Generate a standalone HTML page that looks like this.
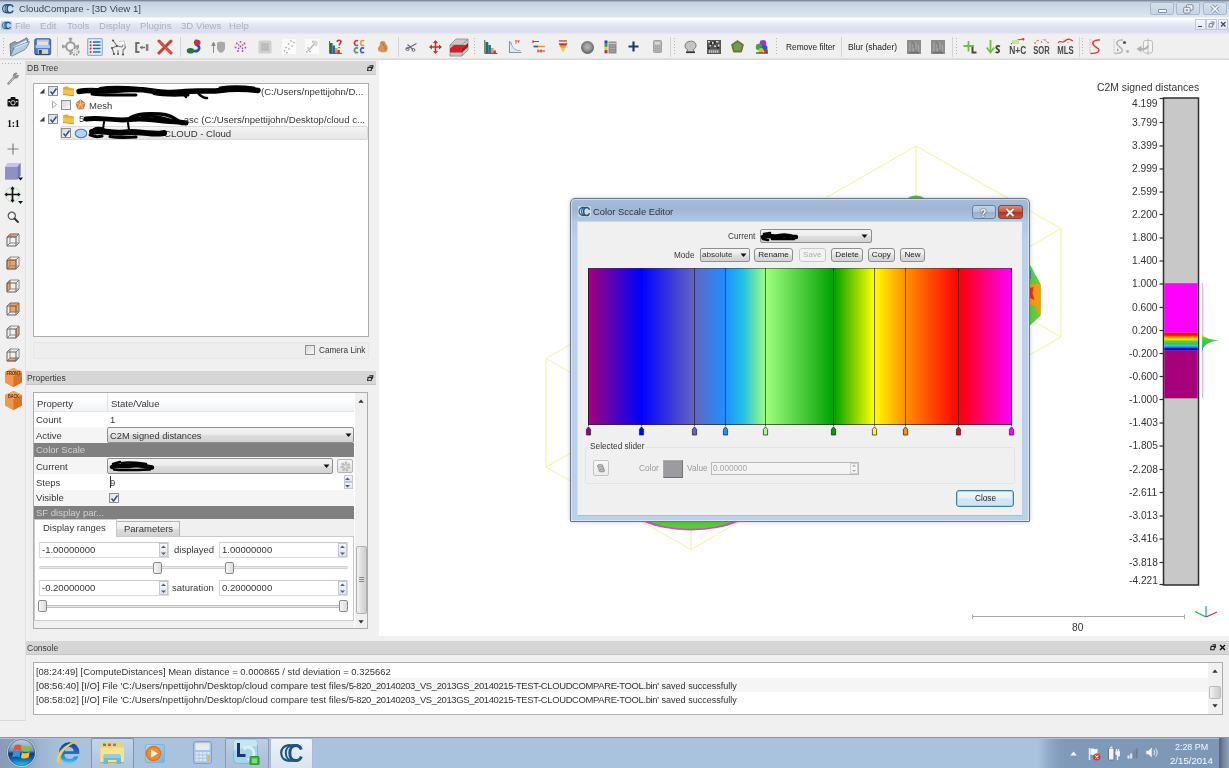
<!DOCTYPE html>
<html>
<head>
<meta charset="utf-8">
<title>CloudCompare</title>
<style>
*{box-sizing:border-box;margin:0;padding:0}
html,body{width:1229px;height:768px;overflow:hidden;background:#f0f0f0;font-family:"Liberation Sans",sans-serif;font-size:9.5px;color:#363636}
.a{position:absolute}
.t{position:absolute;white-space:nowrap;line-height:12px;height:12px;will-change:transform}
#titlebar{left:0;top:0;width:1229px;height:17px;background:linear-gradient(#737f8e 0,#8c98a8 1px,#c3d1e3 2px,#cfdbe9 8px,#dbe5f0 16px)}
#menubar{left:0;top:17px;width:1229px;height:17.5px;background:linear-gradient(#e6ebf4 0,#fafbfe 1.5px,#f5f7fc 4px,#e6e9f6 6.5px,#dfe2f3 10px,#dbdef1 15px,#e2e5f3 16.5px,#eceef5 17.5px)}
#toolbar{left:0;top:34px;width:1229px;height:26px;background:#f0f0f0}
#view3d{left:378.5px;top:60px;width:851px;height:576px;background:#fff}
.ptitle{background:#d6d6d6;height:14px;border-bottom:1px solid #c6c6c6}
.box{background:#fff;border:1px solid #adadad}
.row{position:absolute;left:0;width:320px;height:16px}
.alt{background:#f5f5f5}
.dark{background:#808080}
.combo{position:absolute;border:1px solid #8e8e8e;border-radius:2px;background:linear-gradient(#f4f4f4,#ebebeb 48%,#dedede 52%,#d2d2d2)}
.spin{position:absolute;background:#fff;border:1px solid #dadada;border-top-color:#c8c8c8}
.sbtn{position:absolute;right:1px;width:9px;background:linear-gradient(#f8f8f8,#dfe3ea);border:1px solid #c3c9d3}
.cb{position:absolute;width:10px;height:10px;border:1px solid #8e8f8f;background:linear-gradient(135deg,#d8d8d8,#f8f8f8)}
.sl{width:9px;height:12px;border:1px solid #8a8a8a;border-radius:2px;background:linear-gradient(90deg,#f6f6f6,#dcdcdc)}
.con{font-size:9.45px;color:#333}
.lb{right:71.5px;font-size:10.2px;color:#333;text-align:right}
.btn{will-change:transform;position:absolute;height:14px;line-height:12px;font-size:8.1px;text-align:center;color:#222;border:1px solid #8e8e8e;border-radius:3px;background:linear-gradient(#f4f4f4,#ececec 48%,#dfdfdf 52%,#d4d4d4);white-space:nowrap}
#taskbar{left:0;top:737px;width:1229px;height:31px;background:#a9c3dd}
</style>
</head>
<body>
<div class="a" id="titlebar"></div>
<div class="a" id="menubar"></div>
<div class="a" id="toolbar"></div>
<div class="a" id="view3d"></div>

<!-- TOP -->
<svg class="a" style="left:2px;top:4px" width="12" height="9.5" viewBox="0 0 23 18"><g fill="none" stroke="#1f5583"><path d="M10 1.2C3.8 1.2 1.2 5 1.2 9C1.2 13 3.8 16.8 10 16.8" stroke-width="2.2"/><path d="M13.5 1.3C8 1.3 5.8 5 5.8 9C5.8 13 8 16.7 13.500 16.700" stroke-width="2"/><path d="M21.300 5.600C20.300 2.800 18 1.400 15.800 1.400C12 1.400 9.800 4.600 9.800 9C9.800 13.400 12 16.600 15.800 16.600C18 16.600 20.300 15.200 21.300 12.400" stroke-width="3"/><path d="M9 1.300H16M9 16.700H16" stroke-width="2"/></g></svg>
<div class="t" style="left:19px;top:3px;font-size:9.6px;color:#3c4654">CloudCompare - [3D View 1]</div>
<div class="a" style="left:1150px;top:2px;width:24px;height:13px;border:1px solid #a9b9cc;border-radius:2px;background:linear-gradient(#d3dfec,#c6d4e4)"></div>
<div class="a" style="left:1176px;top:2px;width:24px;height:13px;border:1px solid #a9b9cc;border-radius:2px;background:linear-gradient(#d3dfec,#c6d4e4)"></div>
<div class="a" style="left:1203px;top:2px;width:24px;height:13px;border:1px solid #a9b9cc;border-radius:2px;background:linear-gradient(#d3dfec,#c6d4e4)"></div>
<div class="a" style="left:1158px;top:9px;width:9px;height:4px;border:1px solid #8592a3;background:#f4f6f9;border-radius:1px"></div>
<svg class="a" style="left:1183px;top:4px" width="11" height="10" viewBox="0 0 11 10"><rect x="3.5" y=".7" width="6.5" height="5.5" rx="1" fill="#eef1f5" stroke="#7e8a9b"/><rect x=".7" y="3.3" width="6.5" height="5.8" rx="1" fill="#eef1f5" stroke="#7e8a9b"/><rect x="2.6" y="5.2" width="2.6" height="2" fill="#9aa5b4"/></svg>
<svg class="a" style="left:1210px;top:4px" width="10" height="10" viewBox="0 0 10 10"><path d="M1.5 1.5L8.5 8.5M8.5 1.5L1.5 8.5" stroke="#8592a3" stroke-width="3.2"/><path d="M1.5 1.5L8.5 8.5M8.5 1.5L1.5 8.5" stroke="#fafbfc" stroke-width="1.7"/></svg>
<svg class="a" style="left:1px;top:21px" width="11" height="9" viewBox="-2 -2 27 22"><rect x="-2" y="-2" width="27" height="22" rx="3" fill="#a9cbe4" opacity=".75"/><g fill="none" stroke="#1f5583"><path d="M10 1.2C3.8 1.2 1.2 5 1.2 9C1.2 13 3.8 16.8 10 16.8" stroke-width="2.2"/><path d="M13.5 1.3C8 1.3 5.8 5 5.8 9C5.8 13 8 16.7 13.500 16.700" stroke-width="2"/><path d="M21.300 5.600C20.300 2.800 18 1.400 15.800 1.400C12 1.400 9.800 4.600 9.800 9C9.800 13.400 12 16.600 15.800 16.600C18 16.600 20.300 15.200 21.300 12.400" stroke-width="3"/><path d="M9 1.300H16M9 16.700H16" stroke-width="2"/></g></svg>
<div class="t" style="left:15px;top:20px;font-size:9.6px;color:#abb0c0">File</div>
<div class="t" style="left:40px;top:20px;font-size:9.6px;color:#abb0c0">Edit</div>
<div class="t" style="left:67px;top:20px;font-size:9.6px;color:#abb0c0">Tools</div>
<div class="t" style="left:98.5px;top:20px;font-size:9.6px;color:#abb0c0">Display</div>
<div class="t" style="left:140px;top:20px;font-size:9.6px;color:#abb0c0">Plugins</div>
<div class="t" style="left:180.5px;top:20px;font-size:9.6px;color:#abb0c0">3D Views</div>
<div class="t" style="left:229px;top:20px;font-size:9.6px;color:#abb0c0">Help</div>
<div class="a" style="left:1195px;top:18.5px;width:10.5px;height:11px;border:1px solid #c2c8da;background:linear-gradient(#f6f7fc,#e4e7f4)"></div>
<div class="a" style="left:1206px;top:18.5px;width:10.5px;height:11px;border:1px solid #c2c8da;background:linear-gradient(#f6f7fc,#e4e7f4)"></div>
<div class="a" style="left:1217.5px;top:18.5px;width:10.5px;height:11px;border:1px solid #c2c8da;background:linear-gradient(#f6f7fc,#e4e7f4)"></div>
<div class="a" style="left:1198px;top:25.5px;width:4px;height:1.5px;background:#3d4760"></div>
<svg class="a" style="left:1208px;top:20.5px" width="7" height="7" viewBox="0 0 7 7"><path d="M2.6 1H6.2L5.6 3.8M1.4 2.6H5L4.4 6H.8Z" fill="none" stroke="#6a748c" stroke-width=".9"/></svg>
<svg class="a" style="left:1219.5px;top:21px" width="6.5" height="6.5" viewBox="0 0 6.5 6.5"><path d="M1 1L5.5 5.5M5.5 1L1 5.5" stroke="#3d4760" stroke-width="1.3"/></svg>
<div class="a" style="left:0;top:58px;width:1229px;height:2px;background:linear-gradient(#e2e2e2,#d9d9d9)"></div>
<div class="a" style="left:3px;top:38px;width:1px;height:18px;background:repeating-linear-gradient(#b4b4b4 0 1px,transparent 1px 3px)"></div>
<svg class="a" style="left:9px;top:37px" width="21" height="19.500" viewBox="0 0 21 19.500"><path d="M1.600 18.500L1 7L6 4.500L8 6L15.500 2.200L17.300 .800L19 2.200L18.500 6L4 14Z" fill="#8aa2b4" stroke="#5f7585" stroke-width=".9" stroke-linejoin="round"/><path d="M4.500 9.500L17 3.300L18.300 5.500L6 12.500Z" fill="#f2f6f9"/><path d="M1.600 18.500L5.500 10L20.300 4.500C19.500 8 17.500 11 16 12.500L3.200 19Z" fill="#b0cfe4" stroke="#68849a" stroke-width=".9" stroke-linejoin="round"/><path d="M6.200 11L18.500 6" stroke="#d8e8f3" stroke-width="1.200"/></svg>
<svg class="a" style="left:34px;top:38px" width="17.500" height="17.500" viewBox="0 0 18 18"><rect x=".8" y=".8" width="16.400" height="16.400" rx="1.500" fill="#4f76c2" stroke="#3c5c9c" stroke-width="1"/><rect x="3" y="1.800" width="12" height="6" fill="#dfe3e0"/><rect x="3" y="1.800" width="12" height="2" fill="#c2c8cc"/><rect x="1.600" y="7.200" width="14.800" height="3.200" fill="#a4ccf6"/><rect x="4" y="11.500" width="10.500" height="5.300" fill="#cfd2d6"/><rect x="5" y="12.300" width="3" height="4" fill="#3e4148"/><path d="M1.300 16.900H16.700" stroke="#2e4270" stroke-width="1"/></svg>
<div class="a" style="left:57px;top:37px;width:1px;height:20px;background:#d4d4d4"></div>
<svg class="a" style="left:61px;top:37px" width="20" height="20" viewBox="0 0 20 20"><g fill="none" stroke="#9c9c9c" stroke-width="1.900"><circle cx="9.500" cy="9.500" r="4.300"/><path d="M9.500 1V5.200M9.500 13.800V18M1.200 9.500H5.200M13.800 9.500H17.800"/><path d="M7.800 1.600H11.200M1.800 7.800V11.200M17.200 7.800V11.200" stroke-width="1.600"/></g><circle cx="9.500" cy="9.500" r="2.600" fill="#f8f8f8"/><circle cx="14.300" cy="14.600" r="3.400" fill="#f0f0f0" stroke="#9a9a9a" stroke-width="1.700" stroke-dasharray="1.800 1"/><circle cx="14.300" cy="14.600" r="1.300" fill="#fff" stroke="#aaa" stroke-width=".6"/></svg>
<svg class="a" style="left:87px;top:38px" width="16" height="18" viewBox="0 0 16 18"><rect x=".7" y=".7" width="14.6" height="16.6" rx="1" fill="#e6f0fa" stroke="#8fb1d8" stroke-width="1.3"/><g stroke="#2e68b0" stroke-width="1.5"><path d="M6 4H13.5M6 7.3H13.5M6 10.6H13.5M6 14H13.5"/></g><g fill="#d43a2a"><circle cx="3.6" cy="4" r="1.1"/><circle cx="3.6" cy="7.3" r="1.1"/><circle cx="3.6" cy="10.6" r="1.1"/><circle cx="3.6" cy="14" r="1.1"/></g></svg>
<svg class="a" style="left:110px;top:38px" width="17" height="18" viewBox="0 0 17 18"><path d="M3 2.5L7 8L2 10L4 16M7 8L12 9L14 5L15.5 9.5L13 12L13 16.5M8 12V16" fill="none" stroke="#777" stroke-width="1.1"/><g fill="#555"><circle cx="3" cy="2.5" r="1.1"/><circle cx="7" cy="8" r="1.1"/><circle cx="2" cy="10" r="1.1"/><circle cx="4" cy="16" r="1.1"/><circle cx="13" cy="16.5" r="1.1"/><circle cx="8" cy="16" r="1"/></g><path d="M9 3.5L14.5 3L15 8" fill="#fff" stroke="#bbb" stroke-width=".8"/></svg>
<svg class="a" style="left:135px;top:42px" width="15" height="11" viewBox="0 0 15 11"><path d="M4.5 1H1.2V10H4.5" fill="none" stroke="#707070" stroke-width="2"/><path d="M5 5.5H10" stroke="#707070" stroke-width="1.4"/><path d="M7.5 3.5L5 5.5L7.5 7.5Z" fill="#707070"/><rect x="10.8" y="2.2" width="2.6" height="6.6" fill="#808080"/></svg>
<svg class="a" style="left:157px;top:39px" width="16" height="16" viewBox="0 0 16 16"><path d="M2 2L14 14M14 2L2 14" stroke="#c8402f" stroke-width="3" stroke-linecap="round"/><path d="M2.5 2.2L13.5 13.5" stroke="#e46a55" stroke-width="1"/></svg>
<div class="a" style="left:180px;top:37px;width:1px;height:20px;background:#d4d4d4"></div>
<svg class="a" style="left:186px;top:39px" width="16" height="16" viewBox="0 0 16 16"><path d="M9 2C13 1 15 4 11 6C15 8 13 13 8 12" fill="none" stroke="#2b4fc0" stroke-width="2.6"/><ellipse cx="11" cy="3.4" rx="3.2" ry="2.4" fill="#d82a2a"/><ellipse cx="4.5" cy="11.8" rx="3.8" ry="2.8" fill="#1f7a3a"/></svg>
<svg class="a" style="left:211px;top:40px" width="15" height="14" viewBox="0 0 15 14"><path d="M2.5 13V4M.8 5.5L2.5 2.2L4.2 5.5Z" fill="#8a8a8a" stroke="#8a8a8a" stroke-width="1"/><path d="M6 2.5L10 1.5L14 2.5V8C14 11 11 12.5 10 13C9 12.5 6 11 6 8Z" fill="#a9a9a9"/></svg>
<svg class="a" style="left:234px;top:40px" width="13" height="13" viewBox="0 0 13 13"><circle cx="6.5" cy="6.5" r="5.8" fill="#f3e6ee"/><g fill="#d24a5a"><circle cx="6.5" cy="1.8" r=".9"/><circle cx="10.5" cy="3.5" r=".9"/><circle cx="11.4" cy="7.6" r=".9"/><circle cx="8.6" cy="11" r=".9"/><circle cx="4" cy="11" r=".9"/><circle cx="1.6" cy="7.4" r=".9"/><circle cx="2.8" cy="3.4" r=".9"/><circle cx="6.5" cy="6.5" r=".9"/></g><g fill="#5a6ad2"><circle cx="4.6" cy="5" r=".8"/><circle cx="8.6" cy="5" r=".8"/><circle cx="8.5" cy="8.4" r=".8"/><circle cx="4.6" cy="8.4" r=".8"/></g></svg>
<svg class="a" style="left:258px;top:40px" width="14" height="14" viewBox="0 0 14 14"><rect x=".5" y=".5" width="13" height="13" rx="1.5" fill="#cfcfcf"/><rect x="2.5" y="2.5" width="9" height="9" fill="#bdbdbd" stroke="#dcdcdc" stroke-dasharray="1 1"/></svg>
<svg class="a" style="left:282px;top:39px" width="14" height="15" viewBox="0 0 14 15"><rect width="14" height="15" fill="#fbfbfb"/><g fill="#9a9a9a"><circle cx="9" cy="2" r=".8"/><circle cx="12" cy="3.5" r=".8"/><circle cx="6.5" cy="5" r=".8"/><circle cx="10" cy="7" r=".8"/><circle cx="4" cy="8.5" r=".8"/><circle cx="7" cy="10" r=".8"/><circle cx="2.5" cy="12" r=".8"/><circle cx="5" cy="13.5" r=".8"/></g></svg>
<svg class="a" style="left:305px;top:39px" width="14" height="15" viewBox="0 0 14 15"><rect width="14" height="15" fill="#fbfbfb"/><path d="M3 12L11 3M11 3H7M11 3V7" stroke="#b5b5b5" stroke-width="1.3" fill="none"/><path d="M7 1L13 2.5L12 8" fill="#d8d8d8"/><g fill="#9a9a9a"><circle cx="3" cy="9" r=".8"/><circle cx="5" cy="12.5" r=".8"/><circle cx="2" cy="13" r=".8"/></g></svg>
<svg class="a" style="left:329px;top:39px" width="14" height="15" viewBox="0 0 14 15"><rect x="1" y="4" width="2.6" height="10" fill="#1f7a3a"/><rect x="3.6" y="6.5" width="2.4" height="7.5" fill="#2b5fc0"/><rect x="6" y="9" width="2.4" height="5" fill="#e0a020"/><rect x="8.4" y="11" width="2.4" height="3" fill="#d03030"/><path d="M.6 2V14.4H13" fill="none" stroke="#444" stroke-width=".9"/><path d="M8.2 3C8.2 .8 12 .8 12 3C12 4.6 10.1 4.6 10.1 6.4M10.1 8V9.3" stroke="#d03030" stroke-width="1.5" fill="none"/></svg>
<svg class="a" style="left:353px;top:39px" width="13" height="15" viewBox="0 0 13 15"><g fill="none" stroke-width="1.7"><path d="M5 2.2A2.2 2.4 0 1 0 5 6" stroke="#d03a5a"/><path d="M11 2.2A2.2 2.4 0 1 0 11 6" stroke="#e0a030"/><path d="M5 9.4A2.2 2.4 0 1 0 5 13.2" stroke="#3a9a7a"/><path d="M11 9.4A2.2 2.4 0 1 0 11 13.2" stroke="#3a5ac0"/></g></svg>
<svg class="a" style="left:377px;top:40px" width="12" height="13" viewBox="0 0 12 13"><path d="M4 1.5C6 .5 8.5 1 8.5 3.5C11 5 11.5 10 9.5 11.5C7 13 2 12.5 1 10C.3 8 2 6 3 5C2.5 3.5 3 2 4 1.5Z" fill="#d9925a"/><path d="M4.5 3C6 2.5 7 3.5 6.5 5.5C8.5 6.5 9 9 8 10" fill="none" stroke="#b86a35" stroke-width="1"/></svg>
<div class="a" style="left:398px;top:37px;width:1px;height:20px;background:#d4d4d4"></div>
<svg class="a" style="left:405px;top:41px" width="13" height="12" viewBox="0 0 13 12"><path d="M1.5 8L11.5 2.5M2.5 3.5L8 8.5" stroke="#6a6a7a" stroke-width="1.2"/><circle cx="2.5" cy="8" r="1.6" fill="none" stroke="#6a6a7a"/><circle cx="8.5" cy="9" r="1.4" fill="none" stroke="#6a6a7a"/></svg>
<svg class="a" style="left:429px;top:40px" width="13" height="14" viewBox="0 0 13 14"><path d="M6.5 1.5V12.5M1 7H12" stroke="#c8302a" stroke-width="1.6"/><path d="M6.5 0L9 3H4ZM6.5 14L9 11H4ZM0 7L3 4.5V9.5ZM13 7L10 4.5V9.5Z" fill="#c8302a"/></svg>
<svg class="a" style="left:449px;top:37px" width="20" height="20" viewBox="0 0 20 20"><path d="M1 8L7 2H19V13L13 19H1Z" fill="#c8c8c8" stroke="#8a8a8a" stroke-width=".8"/><path d="M1 8H13L19 2M13 8V19" fill="none" stroke="#8a8a8a" stroke-width=".8"/><path d="M1 11.5L5 8H17L13 11.5V15.5H1Z" fill="#d4202a"/><path d="M13 11.5L19 6V10L13 15.5Z" fill="#a8181e"/></svg>
<div class="a" style="left:474px;top:38px;width:1px;height:18px;background:repeating-linear-gradient(#b4b4b4 0 1px,transparent 1px 3px)"></div>
<svg class="a" style="left:484px;top:40px" width="14" height="14" viewBox="0 0 14 14"><rect x="1.5" y="2" width="2.8" height="11" fill="#1f7a3a"/><rect x="4.3" y="5" width="2.6" height="8" fill="#2b5fc0"/><rect x="6.9" y="8" width="2.6" height="5" fill="#e0a020"/><rect x="9.5" y="10.5" width="2.4" height="2.5" fill="#d03030"/><path d="M.8 0V13.4H13.5" fill="none" stroke="#444" stroke-width=".9"/></svg>
<svg class="a" style="left:508px;top:39px" width="14" height="15" viewBox="0 0 14 15"><path d="M1.5 2V13.5H13.5" fill="none" stroke="#8a93a0" stroke-width="1.1"/><path d="M2.5 3C4 9 6 11.5 12.5 12" fill="none" stroke="#7a8fb5" stroke-width="1.1"/><path d="M2.5 3C4 9 6 11.5 12.5 12V13H2.5Z" fill="#dfe6f2"/><path d="M7 2H12M8 1V5M10.5 1.5V4" stroke="#d85a4a" stroke-width=".9"/></svg>
<svg class="a" style="left:532px;top:39px" width="14" height="15" viewBox="0 0 14 15"><path d="M1 2.5H7M1 1.2V4" stroke="#d03030" stroke-width="1.2"/><path d="M1 7.5H13" stroke="#e0a020" stroke-width="1.6"/><path d="M2 7.5H6" stroke="#2b5fc0" stroke-width="1.6"/><path d="M6 12H13M6 10.5V13.5M9 10.5V13.5" stroke="#d03030" stroke-width="1.1"/></svg>
<svg class="a" style="left:558px;top:40px" width="10" height="13" viewBox="0 0 10 13"><path d="M1 1H9" stroke="#d03030" stroke-width="1.3"/><path d="M.5 3.2H9.5L8.2 5.8H1.8Z" fill="#d03030"/><path d="M1.8 5.8H8.2L7 8.4H3Z" fill="#f0a020"/><path d="M3 8.4H7L5 12.5Z" fill="#e8d020"/></svg>
<div class="a" style="left:580.5px;top:40.5px;width:13px;height:13px;border-radius:50%;background:radial-gradient(circle at 50% 45%,#b8b8b8 0,#9a9a9a 35%,#6c6c6c 62%,#555 100%)"></div>
<svg class="a" style="left:604px;top:40px" width="13" height="14" viewBox="0 0 13 14"><rect x=".5" y=".5" width="3" height="3.2" fill="#2b3fc0"/><rect x=".5" y="3.7" width="3" height="3.2" fill="#30a040"/><rect x=".5" y="6.9" width="3" height="3.2" fill="#e8d020"/><rect x=".5" y="10.1" width="3" height="3.2" fill="#d03030"/><rect x="4.5" y="1.5" width="8" height="12" fill="#8e8e8e"/><path d="M4.5 3.5H12.5" stroke="#c8c8c8" stroke-width="1.2"/><path d="M6 6H11M6 8.5H11M6 11H11" stroke="#b0b0b0" stroke-width=".8"/></svg>
<svg class="a" style="left:628px;top:41px" width="11" height="11" viewBox="0 0 11 11"><path d="M5.5 .5V10.5M.5 5.5H10.5" stroke="#1f3a66" stroke-width="2.2"/></svg>
<svg class="a" style="left:653px;top:40px" width="9" height="13" viewBox="0 0 9 13"><rect x=".5" y=".5" width="8" height="12" rx="1" fill="#b4b4b4" stroke="#a0a0a0"/><rect x="1.8" y="1.8" width="5.4" height="2.6" fill="#d8d8d8"/><path d="M2 6.5H7M2 8.5H7M2 10.5H7" stroke="#9a9a9a" stroke-width=".9" stroke-dasharray="1.2 .7"/></svg>
<div class="a" style="left:670px;top:37px;width:1px;height:20px;background:#d4d4d4"></div>
<div class="a" style="left:674px;top:38px;width:1px;height:18px;background:repeating-linear-gradient(#b4b4b4 0 1px,transparent 1px 3px)"></div>
<svg class="a" style="left:684px;top:40px" width="13" height="14" viewBox="0 0 13 14"><path d="M6.5 1.2C10 1 12.3 3 12 6C11.8 8 10.5 9 9.5 9.5L10 12H3L3.5 9.5C2 9 .8 7.5 1 5.5C1.2 3 3.5 1.3 6.5 1.2Z" fill="#c4c4c4" stroke="#707070" stroke-width=".9"/><path d="M2 12.3H11" stroke="#333" stroke-width="1.6"/></svg>
<svg class="a" style="left:707px;top:40px" width="14" height="14" viewBox="0 0 14 14"><rect width="14" height="14" fill="#555"/><g fill="#d8d8d8"><rect x="1" y="1" width="2" height="1.5"/><rect x="5" y="2" width="1.5" height="2"/><rect x="9" y="1" width="2.5" height="1.5"/><rect x="2.5" y="5" width="1.5" height="1.5"/><rect x="7" y="5.5" width="2" height="1.5"/><rect x="11" y="4.5" width="1.5" height="2"/></g><g fill="#222"><rect x="3.5" y="2.5" width="1.5" height="2"/><rect x="7" y="1.5" width="1.5" height="2.5"/><rect x="10" y="7" width="2" height="1.5"/><rect x="1" y="7.5" width="2" height="1.5"/></g><rect x="1.5" y="9.5" width="11" height="3.5" fill="#888"/><path d="M2.5 10.5V12.5M4.5 10.5V12.5M6.5 10.5V12.5M8.5 10.5V12.5M10.5 10.5V12.5" stroke="#ddd" stroke-width=".8"/></svg>
<svg class="a" style="left:731px;top:40px" width="13" height="13" viewBox="0 0 13 13"><path d="M6.5 .6L12.4 4.6L10.4 12H2.6L.6 4.6Z" fill="#5c8a3a" stroke="#7a5a2a" stroke-width=".9"/><path d="M6.5 2.5L10.5 5.2L9.2 10.2H3.8L2.5 5.2Z" fill="#6ea048"/></svg>
<svg class="a" style="left:755px;top:39px" width="14" height="15" viewBox="0 0 14 15"><circle cx="8" cy="4.5" r="3.4" fill="#9a3ac8"/><circle cx="4" cy="8" r="3.2" fill="#38a848"/><circle cx="9.5" cy="9" r="3" fill="#2a5ac8"/><circle cx="6" cy="11.5" r="2.6" fill="#e0c020"/><circle cx="11" cy="12" r="2" fill="#d03030"/><path d="M1 14H13" stroke="#333" stroke-width="1.2"/></svg>
<div class="a" style="left:776px;top:38px;width:1px;height:18px;background:repeating-linear-gradient(#b4b4b4 0 1px,transparent 1px 3px)"></div>
<div class="t" style="left:785.5px;top:41px;font-size:8.35px;color:#222">Remove filter</div>
<div class="a" style="left:841px;top:37px;width:1px;height:20px;background:#d4d4d4"></div>
<div class="t" style="left:848px;top:41px;font-size:8.5px;color:#222">Blur (shader)</div>
<svg class="a" style="left:907px;top:40px" width="14" height="14" viewBox="0 0 14 14"><rect width="14" height="14" fill="#8c8c8c"/><path d="M3 2V12M6 4V12M9 2V9M11.5 5V12" stroke="#a8a8a8" stroke-width="1.2"/><path d="M2 12.5H12" stroke="#6a6a6a" stroke-width="1.4"/><path d="M4.5 3C6 2 8 5 7 8" stroke="#757575" fill="none"/></svg>
<svg class="a" style="left:930.5px;top:40px" width="14" height="14" viewBox="0 0 14 14"><rect width="14" height="14" fill="#8c8c8c"/><path d="M3 2V12M6 4V12M9 2V9M11.5 5V12" stroke="#a8a8a8" stroke-width="1.2"/><path d="M2 12.5H12" stroke="#6a6a6a" stroke-width="1.4"/><path d="M4.5 3C6 2 8 5 7 8" stroke="#757575" fill="none"/></svg>
<div class="a" style="left:952px;top:37px;width:1px;height:20px;background:#d4d4d4"></div>
<div class="a" style="left:956px;top:38px;width:1px;height:18px;background:repeating-linear-gradient(#b4b4b4 0 1px,transparent 1px 3px)"></div>
<svg class="a" style="left:963px;top:40px" width="15" height="14" viewBox="0 0 15 14"><path d="M5.5 1V11.5M.5 6H11" stroke="#72bc48" stroke-width="1.8"/><path d="M9.5 7V12.5H13.5" fill="none" stroke="#414a41" stroke-width="2"/></svg>
<svg class="a" style="left:986px;top:39px" width="16" height="16" viewBox="0 0 16 16"><path d="M4.5 1V12" stroke="#72bc48" stroke-width="1.8"/><path d="M.8 8.5L4.5 13.5L8.2 8.5" fill="none" stroke="#72bc48" stroke-width="1.8"/><path d="M14 7.5C11 6 9 8 11.5 10C14.5 11.5 13 14.5 9.5 13" fill="none" stroke="#414a41" stroke-width="1.9"/></svg>
<svg class="a" style="will-change:transform;left:1009px;top:38px" width="18" height="17" viewBox="0 0 18 17"><path d="M2 6L9 2L15 .8" stroke="#d03030" stroke-width="1.1" fill="none"/><path d="M13 .2L16 .8L14 3Z" fill="#d03030"/><rect x="3" y="2" width="7" height="4" fill="#c8e0a0"/><text x=".3" y="16" font-family="Liberation Sans" font-weight="bold" font-size="10" fill="#4a4a4a" textLength="17" lengthAdjust="spacingAndGlyphs">N+C</text></svg>
<svg class="a" style="will-change:transform;left:1033px;top:38px" width="17" height="17" viewBox="0 0 17 17"><g fill="#d03030"><circle cx="2" cy="5" r=".7"/><circle cx="5" cy="2.5" r=".7"/><circle cx="8.5" cy="4" r=".7"/><circle cx="12" cy="2" r=".7"/><circle cx="15" cy="4.5" r=".7"/></g><g fill="#e0a020"><circle cx="3.5" cy="3" r=".6"/><circle cx="10" cy="1.5" r=".6"/><circle cx="13.5" cy="3.5" r=".6"/></g><text x=".3" y="16" font-family="Liberation Sans" font-weight="bold" font-size="10" fill="#4a4a4a" textLength="16.4" lengthAdjust="spacingAndGlyphs">SOR</text></svg>
<svg class="a" style="will-change:transform;left:1057px;top:38px" width="17" height="17" viewBox="0 0 17 17"><path d="M1 5C3 1 5 6 8 3S12 1 16 3" fill="none" stroke="#d03030" stroke-width="1.1"/><g fill="#e07030"><circle cx="3" cy="5" r=".6"/><circle cx="7" cy="2" r=".6"/><circle cx="11" cy="4.5" r=".6"/><circle cx="14" cy="1.5" r=".6"/></g><text x=".3" y="16" font-family="Liberation Sans" font-weight="bold" font-size="10" fill="#4a4a4a" textLength="16.4" lengthAdjust="spacingAndGlyphs">MLS</text></svg>
<div class="a" style="left:1079px;top:37px;width:1px;height:20px;background:#d4d4d4"></div>
<div class="a" style="left:1082px;top:38px;width:1px;height:18px;background:repeating-linear-gradient(#b4b4b4 0 1px,transparent 1px 3px)"></div>
<svg class="a" style="left:1088px;top:38px" width="15" height="18" viewBox="0 0 15 18"><path d="M2 1V15" stroke="#e89a90" stroke-width=".9" stroke-dasharray="1.5 1"/><path d="M12 2C6 1.5 3 4 6 7.5C9 10 13 11.5 10 14C8 15.5 4 15.5 2.5 15.5" fill="none" stroke="#d83a3a" stroke-width="1.5"/></svg>
<svg class="a" style="left:1112px;top:38px" width="18" height="18" viewBox="0 0 18 18"><path d="M2 1V16" stroke="#bdbdbd" stroke-width=".9" stroke-dasharray="1.5 1"/><path d="M11 2C6 1.5 3 4 6 7.5C9 10 12 11.5 9.5 14C8 15.5 4 15.5 2.5 15.5" fill="none" stroke="#b4b4b4" stroke-width="1.5"/><circle cx="12.5" cy="4.5" r="1.6" fill="#555"/><circle cx="15.5" cy="13.5" r="1.4" fill="#b0b0b0"/><path d="M5 10.5L7 12L5 13.5Z" fill="#999"/></svg>
<svg class="a" style="left:1136px;top:38px" width="18" height="18" viewBox="0 0 18 18"><rect x="7.5" y="2.5" width="9" height="12.5" rx="2" fill="#f4f4f4" stroke="#bcbcbc" stroke-width="1"/><path d="M12 .5V17" stroke="#bcbcbc" stroke-width="1"/><path d="M12 7.5C11 10.5 8 11.5 5 11" fill="none" stroke="#b0b0b0" stroke-width="2"/><path d="M.5 11L5.5 7.5V14.5Z" fill="#b0b0b0"/></svg>

<!-- VIEW -->

<svg class="a" style="left:378px;top:60px" width="851" height="576" viewBox="0 0 851 576">
<path d="M538.0 86.0L538.0 194.5M538.0 86.0L683.0 168.5M538.0 86.0L168.0 298.5M538.0 194.5L683.0 277.0M538.0 194.5L168.0 407.0M683.0 168.5L683.0 277.0M683.0 168.5L313.0 381.0M168.0 298.5L168.0 407.0M168.0 298.5L313.0 381.0M683.0 277.0L313.0 489.5M168.0 407.0L313.0 489.5M313.0 381.0L313.0 489.5" fill="none" stroke="#f4f196" stroke-width="1"/>
<!-- mesh bits -->
<ellipse cx="538" cy="141" rx="9.5" ry="5.5" fill="#5cc02c"/>
<path d="M651 203L654 208L657 214L660 219L662.7 224.5V255.5L660 258L651 266.5Z" fill="#5ccf3c"/>
<path d="M651 224.5L661.5 224L662.7 227V253L660 255.5L657.5 246L651 244.5Z" fill="#f59a10"/>
<path d="M651 228L655.5 227L654.5 233L656.5 240L652 238Z" fill="#e03018"/>
<path d="M651 209L653 211V219H651Z" fill="#3a7ac8"/>
<ellipse cx="313" cy="438.5" rx="68" ry="32" fill="#d448c8"/>
<ellipse cx="313" cy="437.3" rx="66.5" ry="31.5" fill="#58cf38"/>
<!-- scale line -->
<path d="M594.5 556.5H806.5M594.5 554.5V559M806.5 554.5V559" stroke="#a8a8a8" stroke-width="1" fill="none"/>
<!-- trihedron -->
<path d="M828 557V546" stroke="#20a8e0" stroke-width="1.3"/>
<path d="M828 557L817 551.5" stroke="#20b040" stroke-width="1.3"/>
<path d="M828 557L839 552" stroke="#d03030" stroke-width="1.3"/>
<!-- color bar -->
<rect x="785.5" y="38" width="35" height="487" fill="#c8c8c8" stroke="#2e2e2e" stroke-width="1.5"/>
<rect x="786.3" y="223.2" width="33.4" height="49.5" fill="#ff00ff"/>
<rect x="786.3" y="290.5" width="33.4" height="47.8" fill="#a8007c"/>
<rect x="786.3" y="272.7" width="33.4" height="17.8" fill="url(#rb)"/>
<defs><linearGradient id="rb" x1="0" y1="0" x2="0" y2="1">
<stop offset="0" stop-color="#ff0018"/><stop offset=".14" stop-color="#ff1000"/><stop offset=".24" stop-color="#ff9000"/><stop offset=".36" stop-color="#ffe800"/><stop offset=".48" stop-color="#60d020"/><stop offset=".62" stop-color="#30c850"/><stop offset=".74" stop-color="#40c0e8"/><stop offset=".82" stop-color="#3070e8"/><stop offset=".9" stop-color="#0000f0"/><stop offset="1" stop-color="#2000c0"/></linearGradient>
<linearGradient id="hg" x1="0" y1="0" x2="0" y2="1">
<stop offset="0" stop-color="#ff9000"/><stop offset=".15" stop-color="#d0e000"/><stop offset=".3" stop-color="#50d030"/><stop offset=".7" stop-color="#30c060"/><stop offset=".85" stop-color="#30a0e0"/><stop offset="1" stop-color="#0000e0"/></linearGradient></defs>
<path d="M824.5 223V338" stroke="#eaa8e4" stroke-width="1"/>
<path d="M824 273.5C826 277.5 832 279.5 840.5 280.5C832 281.5 826.5 284 824 290.5Z" fill="url(#hg)"/>
<g stroke="#2e2e2e" stroke-width="1.2"><path d="M781.5 38.5H785"/><path d="M781.5 62.5H785"/><path d="M781.5 86.0H785"/><path d="M781.5 109.0H785"/><path d="M781.5 132.0H785"/><path d="M781.5 154.5H785"/><path d="M781.5 178.0H785"/><path d="M781.5 201.0H785"/><path d="M781.5 224.0H785"/><path d="M781.5 247.5H785"/><path d="M781.5 270.5H785"/><path d="M781.5 293.5H785"/><path d="M781.5 316.5H785"/><path d="M781.5 339.5H785"/><path d="M781.5 363.0H785"/><path d="M781.5 386.0H785"/><path d="M781.5 409.5H785"/><path d="M781.5 432.5H785"/><path d="M781.5 456.0H785"/><path d="M781.5 479.0H785"/><path d="M781.5 502.5H785"/><path d="M781.5 524.5H785"/></g>
</svg>
<div class="t lb" style="top:98.0px">4.199</div>
<div class="t lb" style="top:116.5px">3.799</div>
<div class="t lb" style="top:140.0px">3.399</div>
<div class="t lb" style="top:163.0px">2.999</div>
<div class="t lb" style="top:186.0px">2.599</div>
<div class="t lb" style="top:208.5px">2.200</div>
<div class="t lb" style="top:232.0px">1.800</div>
<div class="t lb" style="top:255.0px">1.400</div>
<div class="t lb" style="top:278.0px">1.000</div>
<div class="t lb" style="top:301.5px">0.600</div>
<div class="t lb" style="top:324.5px">0.200</div>
<div class="t lb" style="top:347.5px">-0.200</div>
<div class="t lb" style="top:370.5px">-0.600</div>
<div class="t lb" style="top:393.5px">-1.000</div>
<div class="t lb" style="top:417.0px">-1.403</div>
<div class="t lb" style="top:440.0px">-1.805</div>
<div class="t lb" style="top:463.5px">-2.208</div>
<div class="t lb" style="top:486.5px">-2.611</div>
<div class="t lb" style="top:510.0px">-3.013</div>
<div class="t lb" style="top:533.0px">-3.416</div>
<div class="t lb" style="top:556.5px">-3.818</div>
<div class="t lb" style="top:574.5px">-4.221</div>
<div class="t" style="left:1096.5px;top:82px;font-size:10.4px;color:#333">C2M signed distances</div>
<div class="t" style="left:1072px;top:622px;font-size:10.2px;color:#333">80</div>


<!-- DIALOG -->
<div class="a" style="left:570px;top:197.5px;width:460px;height:324.5px;border:1px solid #69778a;border-radius:5px 5px 1px 1px;background:linear-gradient(#a6bcd7 0,#9fb7d4 10px,#b1c8e3 22px,#bbd0e9 40px,#bbd0e9 100%);box-shadow:0 0 4px rgba(60,70,90,.3)"></div>
<div class="a" style="left:571px;top:198.5px;width:458px;height:322.5px;border:1px solid rgba(255,255,255,.45);border-radius:4px 4px 0 0"></div>
<div class="a" style="left:576.5px;top:221px;width:446.5px;height:294.5px;background:#f0f0f0;border:1px solid #d3e0ee;border-top-color:#c8d8ea;border-bottom-color:#a9bdd6;border-right-color:#b8cbe0"></div>
<svg class="a" style="left:578px;top:206px" width="13" height="11" viewBox="-1 -1 25 20"><rect x="-1" y="-1" width="25" height="20" fill="#dde7f2" opacity=".7"/><g fill="none" stroke="#1f5583"><path d="M10 1.2C3.8 1.2 1.2 5 1.2 9C1.2 13 3.8 16.8 10 16.8" stroke-width="2.2"/><path d="M13.5 1.3C8 1.3 5.8 5 5.8 9C5.8 13 8 16.7 13.500 16.700" stroke-width="2"/><path d="M21.300 5.600C20.300 2.800 18 1.400 15.800 1.400C12 1.400 9.800 4.600 9.800 9C9.800 13.400 12 16.600 15.800 16.600C18 16.600 20.300 15.200 21.300 12.400" stroke-width="3"/><path d="M9 1.300H16M9 16.700H16" stroke-width="2"/></g></svg>
<div class="t" style="left:592.5px;top:206px;font-size:9.4px;color:#2c3440">Color Sccale Editor</div>
<div class="a" style="left:971.5px;top:205px;width:24px;height:14px;border:1px solid #6f819a;border-radius:3px;background:linear-gradient(#c4d4e8,#b3c6de 48%,#9ab1cf 52%,#a9c0dc)"></div>
<div class="t" style="left:979.5px;top:206.5px;font-size:10.5px;font-weight:bold;color:#fff;text-shadow:0 0 2px #445,0 0 1px #334">?</div>
<div class="a" style="left:997.5px;top:205px;width:25px;height:14px;border:1px solid #7a4a44;border-radius:3px;background:linear-gradient(#dc8a7c,#cc5a48 45%,#b9301c 52%,#c8543c)"></div>
<svg class="a" style="left:1005px;top:207.5px" width="10" height="9" viewBox="0 0 10 9"><path d="M1.5 1L8.5 8M8.5 1L1.5 8" stroke="#6b2a20" stroke-width="3.4" opacity=".6"/><path d="M1.5 1L8.5 8M8.5 1L1.5 8" stroke="#fff" stroke-width="2"/></svg>

<div class="t" style="left:728px;top:231px;font-size:8.2px">Current</div>
<div class="combo" style="left:760px;top:228.8px;width:111.5px;height:14px"></div>
<svg class="a" style="left:861px;top:234px" width="7" height="5"><path d="M.5 .5H6.5L3.5 4Z" fill="#111"/></svg>
<svg class="a" style="left:760px;top:229px" width="44" height="15" viewBox="0 0 44 15"><g fill="none" stroke="#000" stroke-linecap="round"><path d="M3 8C8 5 14 9 20 7S30 8 36 8" stroke-width="4.5"/><path d="M4 5L10 4M12 10H34M3 10L8 11" stroke-width="2.5"/></g></svg>
<div class="t" style="left:674px;top:249.5px;font-size:8.2px">Mode</div>
<div class="combo" style="left:699.5px;top:247.6px;width:50px;height:14px"></div>
<div class="t" style="left:702px;top:249px;font-size:8.1px">absolute</div>
<svg class="a" style="left:740px;top:253px" width="7" height="5"><path d="M.5 .5H6.5L3.5 4Z" fill="#111"/></svg>
<div class="btn" style="left:754px;top:247.6px;width:39px">Rename</div>
<div class="btn" style="left:799px;top:247.6px;width:26.5px;color:#b0b0b0;border-color:#c8c8c8;background:#f2f2f2">Save</div>
<div class="btn" style="left:831px;top:247.6px;width:32px">Delete</div>
<div class="btn" style="left:868px;top:247.6px;width:26.5px">Copy</div>
<div class="btn" style="left:900px;top:247.6px;width:25px">New</div>

<div class="a" style="left:588px;top:268px;width:423.5px;height:157px;background:linear-gradient(90deg,#a5007b 0.00%,#0000ff 12.51%,#6464c0 25.03%,#1e90ff 32.35%,#20c0e8 36.5%,#a0ff80 41.91%,#00a000 57.97%,#ffff00 67.41%,#ff9000 74.85%,#ff0000 87.37%,#ff00ff 99.88%)"></div>
<div class="a" style="left:588px;top:268px;width:423.5px;height:157px;border-top:1px solid rgba(60,60,60,.55);border-bottom:1px solid rgba(40,40,40,.7)"></div>
<div class="a" style="left:587.5px;top:268px;width:1px;height:158px;background:rgba(20,20,40,.62)"></div>
<svg class="a" style="left:584.5px;top:425.5px" width="7" height="10" viewBox="0 0 7 10"><path d="M3.5 .8L5.600 3.400V9H1.400V3.400Z" fill="#a5007b" stroke="rgba(30,30,50,.7)" stroke-width="1"/></svg>
<div class="a" style="left:640.5px;top:268px;width:1px;height:158px;background:rgba(20,20,40,.62)"></div>
<svg class="a" style="left:637.5px;top:425.5px" width="7" height="10" viewBox="0 0 7 10"><path d="M3.5 .8L5.600 3.400V9H1.400V3.400Z" fill="#0000ff" stroke="rgba(30,30,50,.7)" stroke-width="1"/></svg>
<div class="a" style="left:693.5px;top:268px;width:1px;height:158px;background:rgba(20,20,40,.62)"></div>
<svg class="a" style="left:690.5px;top:425.5px" width="7" height="10" viewBox="0 0 7 10"><path d="M3.5 .8L5.600 3.400V9H1.400V3.400Z" fill="#6464c0" stroke="rgba(30,30,50,.7)" stroke-width="1"/></svg>
<div class="a" style="left:724.5px;top:268px;width:1px;height:158px;background:rgba(20,20,40,.62)"></div>
<svg class="a" style="left:721.5px;top:425.5px" width="7" height="10" viewBox="0 0 7 10"><path d="M3.5 .8L5.600 3.400V9H1.400V3.400Z" fill="#1e90ff" stroke="rgba(30,30,50,.7)" stroke-width="1"/></svg>
<div class="a" style="left:765.0px;top:268px;width:1px;height:158px;background:rgba(20,20,40,.62)"></div>
<svg class="a" style="left:762.0px;top:425.5px" width="7" height="10" viewBox="0 0 7 10"><path d="M3.5 .8L5.600 3.400V9H1.400V3.400Z" fill="#a0ff80" stroke="rgba(30,30,50,.7)" stroke-width="1"/></svg>
<div class="a" style="left:833.0px;top:268px;width:1px;height:158px;background:rgba(20,20,40,.62)"></div>
<svg class="a" style="left:830.0px;top:425.5px" width="7" height="10" viewBox="0 0 7 10"><path d="M3.5 .8L5.600 3.400V9H1.400V3.400Z" fill="#00a000" stroke="rgba(30,30,50,.7)" stroke-width="1"/></svg>
<div class="a" style="left:874.0px;top:268px;width:1px;height:158px;background:rgba(20,20,40,.62)"></div>
<svg class="a" style="left:871.0px;top:425.5px" width="7" height="10" viewBox="0 0 7 10"><path d="M3.5 .8L5.600 3.400V9H1.400V3.400Z" fill="#ffff00" stroke="rgba(30,30,50,.7)" stroke-width="1"/></svg>
<div class="a" style="left:904.5px;top:268px;width:1px;height:158px;background:rgba(20,20,40,.62)"></div>
<svg class="a" style="left:901.5px;top:425.5px" width="7" height="10" viewBox="0 0 7 10"><path d="M3.5 .8L5.600 3.400V9H1.400V3.400Z" fill="#ff9000" stroke="rgba(30,30,50,.7)" stroke-width="1"/></svg>
<div class="a" style="left:957.5px;top:268px;width:1px;height:158px;background:rgba(20,20,40,.62)"></div>
<svg class="a" style="left:954.5px;top:425.5px" width="7" height="10" viewBox="0 0 7 10"><path d="M3.5 .8L5.600 3.400V9H1.400V3.400Z" fill="#ff0000" stroke="rgba(30,30,50,.7)" stroke-width="1"/></svg>
<div class="a" style="left:1010.5px;top:268px;width:1px;height:158px;background:rgba(20,20,40,.62)"></div>
<svg class="a" style="left:1007.5px;top:425.5px" width="7" height="10" viewBox="0 0 7 10"><path d="M3.5 .8L5.600 3.400V9H1.400V3.400Z" fill="#ff00ff" stroke="rgba(30,30,50,.7)" stroke-width="1"/></svg>

<div class="a" style="left:584.5px;top:447px;width:430px;height:36.5px;border:1px solid #e3e3e3;border-radius:3px"></div>
<div class="t" style="left:588px;top:440px;font-size:8.3px;background:#f0f0f0;padding:0 2px">Selected slider</div>
<div class="a" style="left:592.5px;top:460px;width:16px;height:16px;border:1px solid #c4c4c4;border-radius:2px;background:linear-gradient(#f8f8f8,#ececec)"></div>
<svg class="a" style="left:595.5px;top:463px" width="10" height="10" viewBox="0 0 10 10"><ellipse cx="4.2" cy="3" rx="3" ry="1.6" fill="#bdbdbd" stroke="#8a8a8a" stroke-width=".7"/><ellipse cx="5" cy="5.2" rx="3" ry="1.6" fill="#c8c8c8" stroke="#8a8a8a" stroke-width=".7"/><ellipse cx="5.8" cy="7.4" rx="3" ry="1.6" fill="#b4b4b4" stroke="#8a8a8a" stroke-width=".7"/></svg>
<div class="t" style="left:639px;top:462px;font-size:8.3px;color:#9a9a9a">Color</div>
<div class="a" style="left:663px;top:459.5px;width:19.5px;height:18px;background:#9c9ca0;border-right:1.5px solid #77777b;border-bottom:1.5px solid #6e6e72;border-top:1px solid #a8a8ac;border-left:1px solid #a8a8ac"></div>
<div class="t" style="left:687px;top:462px;font-size:8.3px;color:#9a9a9a">Value</div>
<div class="a" style="left:710.5px;top:461.5px;width:148.5px;height:13.5px;border:1px solid #b9b9b9;background:#f4f4f4"></div>
<div class="t" style="left:713px;top:462.5px;font-size:8.2px;color:#a6a6a6">0.000000</div>
<div class="a" style="left:850px;top:462.5px;width:8px;height:11.5px;border:1px solid #d0d0d0;background:#f6f6f6"></div>
<svg class="a" style="left:852px;top:464px" width="4" height="9"><path d="M0 2.5L2 .5L4 2.5ZM0 6L2 8L4 6Z" fill="#a8a8a8"/></svg>
<div class="a" style="left:955.5px;top:490px;width:58.5px;height:17px;border:1px solid #3c7fb1;border-radius:3px;background:linear-gradient(#f2f7fb,#e6f0f8 48%,#d4e6f4 52%,#cfe3f3);box-shadow:inset 0 0 0 1px #9fd5f0"></div>
<div class="t" style="left:975px;top:493px;font-size:8.2px;color:#222">Close</div>

<!-- LEFT TB -->
<div class="a" style="left:2px;top:63px;width:21px;height:1px;background:repeating-linear-gradient(90deg,#b4b4b4 0 1px,transparent 1px 3px)"></div>
<svg class="a" style="left:7px;top:72px" width="12" height="13" viewBox="0 0 12 13"><path d="M1.5 11.5L7.5 5" stroke="#8a8a8a" stroke-width="2.4" stroke-linecap="round"/><path d="M6.5 4.2C6 2 8 .6 10 1.2L8.6 3L9.6 4.2L11.2 3C11.6 5 10 6.6 8 6" fill="#9a9a9a" stroke="#7a7a7a" stroke-width=".8"/><path d="M2 11L7 5.6" stroke="#e0e0e0" stroke-width=".8"/></svg>
<svg class="a" style="left:7px;top:96px" width="12" height="11" viewBox="0 0 12 11"><rect x=".5" y="3" width="11" height="7.5" rx="1" fill="#111"/><rect x="3.5" y="1" width="5" height="3" rx="1" fill="#111"/><circle cx="6" cy="6.8" r="2.2" fill="#111" stroke="#e8e8e8" stroke-width=".9"/><rect x="1.5" y="5" width="1.6" height="1.2" fill="#ddd"/><rect x="9" y="5" width="1.6" height="1.2" fill="#ddd"/></svg>
<div class="t" style="left:6.5px;top:118px;font-family:'Liberation Serif',serif;font-weight:bold;font-size:10px;color:#111;letter-spacing:-.3px">1:1</div>
<svg class="a" style="left:7px;top:142.5px" width="12" height="12" viewBox="0 0 12 12"><path d="M6 .5V11.5M.5 6H11.5" stroke="#808080" stroke-width="1.2"/></svg>
<svg class="a" style="left:3.5px;top:162px" width="19" height="19" viewBox="0 0 19 19"><path d="M1 5L4 1H16.5V13.5L13.5 17.5H1Z" fill="#a4a4d8"/><path d="M1 5H13.5V17.5H1Z" fill="#9090c8"/><path d="M1 5L4 1H16.5L13.5 5Z" fill="#c4c4ec"/><path d="M13.5 5L16.5 1V13.5L13.5 17.5Z" fill="#7878b4"/><path d="M14 15.5H19L16.5 18.5Z" fill="#111"/></svg>
<svg class="a" style="left:4px;top:186px" width="20" height="18" viewBox="0 0 20 18"><circle cx="8.5" cy="8.5" r="7.3" fill="#eef4ee" stroke="#b8d8c0" stroke-width=".9"/><path d="M8.5 2V15M2 8.5H15" stroke="#111" stroke-width="1.7"/><path d="M8.5 .3L10.6 3.2H6.4ZM8.5 16.7L10.6 13.8H6.4ZM.3 8.5L3.2 6.4V10.6ZM16.7 8.5L13.8 6.4V10.6Z" fill="#111"/><path d="M14 15H19L16.5 18Z" fill="#111"/></svg>
<svg class="a" style="left:7px;top:211px" width="12" height="12" viewBox="0 0 12 12"><circle cx="4.8" cy="4.8" r="3.6" fill="#f4f4f4" stroke="#555" stroke-width="1.2"/><path d="M7.5 7.5L11 11" stroke="#333" stroke-width="1.9" stroke-linecap="round"/></svg>
<svg class="a" style="left:5.5px;top:232.7px" width="14" height="14" viewBox="0 0 14 14"><path d="M1 4L4 1H13L10 4Z" fill="#f0a060" stroke="#d07030" stroke-width=".6"/><g fill="none" stroke="#505050" stroke-width=".9"><path d="M1 4H10V13H1Z"/><path d="M4 1H13V10H4Z" stroke="#808080"/><path d="M1 4L4 1M10 4L13 1M10 13L13 10M1 13L4 10" stroke="#707070"/></g></svg>
<svg class="a" style="left:5.5px;top:255.60000000000002px" width="14" height="14" viewBox="0 0 14 14"><path d="M1 4H10V13H1Z" fill="#f0a060" stroke="#d07030" stroke-width=".6"/><g fill="none" stroke="#505050" stroke-width=".9"><path d="M1 4H10V13H1Z"/><path d="M4 1H13V10H4Z" stroke="#808080"/><path d="M1 4L4 1M10 4L13 1M10 13L13 10M1 13L4 10" stroke="#707070"/></g></svg>
<svg class="a" style="left:5.5px;top:279px" width="14" height="14" viewBox="0 0 14 14"><path d="M1 4L4 1V10L1 13Z" fill="#f0a060" stroke="#d07030" stroke-width=".6"/><g fill="none" stroke="#505050" stroke-width=".9"><path d="M1 4H10V13H1Z"/><path d="M4 1H13V10H4Z" stroke="#808080"/><path d="M1 4L4 1M10 4L13 1M10 13L13 10M1 13L4 10" stroke="#707070"/></g></svg>
<svg class="a" style="left:5.5px;top:301.8px" width="14" height="14" viewBox="0 0 14 14"><path d="M4 1H13V10H4Z" fill="#f0a060" stroke="#d07030" stroke-width=".6"/><g fill="none" stroke="#505050" stroke-width=".9"><path d="M1 4H10V13H1Z"/><path d="M4 1H13V10H4Z" stroke="#808080"/><path d="M1 4L4 1M10 4L13 1M10 13L13 10M1 13L4 10" stroke="#707070"/></g></svg>
<svg class="a" style="left:5.5px;top:324.7px" width="14" height="14" viewBox="0 0 14 14"><path d="M10 4L13 1V10L10 13Z" fill="#f0a060" stroke="#d07030" stroke-width=".6"/><g fill="none" stroke="#505050" stroke-width=".9"><path d="M1 4H10V13H1Z"/><path d="M4 1H13V10H4Z" stroke="#808080"/><path d="M1 4L4 1M10 4L13 1M10 13L13 10M1 13L4 10" stroke="#707070"/></g></svg>
<svg class="a" style="left:5.5px;top:347.5px" width="14" height="14" viewBox="0 0 14 14"><path d="M1 13L4 10H13L10 13Z" fill="#f0a060" stroke="#d07030" stroke-width=".6"/><g fill="none" stroke="#505050" stroke-width=".9"><path d="M1 4H10V13H1Z"/><path d="M4 1H13V10H4Z" stroke="#808080"/><path d="M1 4L4 1M10 4L13 1M10 13L13 10M1 13L4 10" stroke="#707070"/></g></svg>
<svg class="a" style="will-change:transform;left:3.5px;top:367.0px" width="19" height="21" viewBox="0 0 19 21"><path d="M9.5 1L18 5V15.5L9.5 20L1 15.5V5Z" fill="#e88838"/><path d="M1 5L9.5 9V20L1 15.5Z" fill="#f09848"/><path d="M18 5L9.5 9V20L18 15.5Z" fill="#d87428"/><path d="M1 5L9.5 1L18 5L9.5 9Z" fill="#f4a860"/><text x="9.5" y="7.6" text-anchor="middle" font-family="Liberation Sans" font-weight="bold" font-size="4.6" fill="#4a2a10" textLength="14" lengthAdjust="spacingAndGlyphs">FRONT</text></svg>
<svg class="a" style="will-change:transform;left:3.5px;top:389.8px" width="19" height="21" viewBox="0 0 19 21"><path d="M9.5 1L18 5V15.5L9.5 20L1 15.5V5Z" fill="#e88838"/><path d="M1 5L9.5 9V20L1 15.5Z" fill="#f09848"/><path d="M18 5L9.5 9V20L18 15.5Z" fill="#d87428"/><path d="M1 5L9.5 1L18 5L9.5 9Z" fill="#f4a860"/><text x="9.5" y="7.6" text-anchor="middle" font-family="Liberation Sans" font-weight="bold" font-size="4.6" fill="#4a2a10" textLength="11" lengthAdjust="spacingAndGlyphs">BACK</text></svg>

<!-- DB TREE -->
<div class="a ptitle" style="left:26px;top:60.5px;width:349.5px;height:14.5px"></div>
<div class="t" style="left:27px;top:62px;font-size:8.5px">DB Tree</div>
<div class="a box" style="left:33px;top:83px;width:335.5px;height:254px"></div>
<div class="a" style="left:33px;top:342px;width:336px;height:17px;border:1px solid #e6e6e6;border-radius:2px;background:#eeeeee"></div>
<div class="cb" style="left:305px;top:345px"></div>
<div class="t" style="left:319px;top:345px;font-size:8.2px">Camera Link</div>


<!-- tree rows -->
<div class="a" style="left:60px;top:126px;width:308px;height:14px;background:linear-gradient(#f4f4f4,#e6e6e6);border:1px solid #dadada;border-radius:2px"></div>
<svg class="a" style="left:38px;top:87px" width="8" height="8" viewBox="0 0 8 8"><path d="M6.5 1.5V6.5H1.5Z" fill="#404040"/></svg>
<svg class="a" style="left:38px;top:115px" width="8" height="8" viewBox="0 0 8 8"><path d="M6.5 1.5V6.5H1.5Z" fill="#404040"/></svg>
<svg class="a" style="left:51px;top:100px" width="8" height="9" viewBox="0 0 8 9"><path d="M1.5 1L5.5 4.5L1.5 8Z" fill="#fff" stroke="#a8a8a8" stroke-width="1"/></svg>
<div class="cb" style="left:48px;top:86px"></div>
<div class="cb" style="left:61px;top:100px"></div>
<div class="cb" style="left:48px;top:114px"></div>
<div class="cb" style="left:61px;top:128px"></div>
<svg class="a" style="left:49px;top:87px" width="9" height="9" viewBox="0 0 9 9"><path d="M1.5 4.5L3.5 7L7.5 1.5" fill="none" stroke="#3a4f9a" stroke-width="1.6"/></svg>
<svg class="a" style="left:49px;top:115px" width="9" height="9" viewBox="0 0 9 9"><path d="M1.5 4.5L3.5 7L7.5 1.5" fill="none" stroke="#3a4f9a" stroke-width="1.6"/></svg>
<svg class="a" style="left:62px;top:129px" width="9" height="9" viewBox="0 0 9 9"><path d="M1.5 4.5L3.5 7L7.5 1.5" fill="none" stroke="#3a4f9a" stroke-width="1.6"/></svg>
<!-- folders -->
<svg class="a" style="left:62px;top:85px" width="13" height="12" viewBox="0 0 13 12"><path d="M1 2.5L5 1L6.5 2.5L12 3.5V10.5L1 9.5Z" fill="#e3b02f"/><path d="M1 4.5L12 5.5V10.8L1 9.7Z" fill="#f0c64a"/><path d="M1 9.5L12 10.8" stroke="#b8861a" stroke-width=".8"/></svg>
<svg class="a" style="left:62px;top:113px" width="13" height="12" viewBox="0 0 13 12"><path d="M1 2.5L5 1L6.5 2.5L12 3.5V10.5L1 9.5Z" fill="#e3b02f"/><path d="M1 4.5L12 5.5V10.8L1 9.7Z" fill="#f0c64a"/><path d="M1 9.5L12 10.8" stroke="#b8861a" stroke-width=".8"/></svg>
<!-- mesh icon -->
<svg class="a" style="left:75px;top:99px" width="11" height="11" viewBox="0 0 11 11"><path d="M5.5 .8L10 4.2L8.3 9.8H2.7L1 4.2Z" fill="#e08a4a" stroke="#c05a20" stroke-width=".8"/><path d="M5.5 .8V5.5L10 4.2M5.5 5.5L8.3 9.8M5.5 5.5L2.7 9.8M5.5 5.5L1 4.2" stroke="#f8d8b8" stroke-width=".7" fill="none"/></svg>
<!-- cloud icon -->
<svg class="a" style="left:74px;top:128px" width="14" height="11" viewBox="0 0 14 11"><ellipse cx="7" cy="5.5" rx="5.8" ry="4.2" fill="#b5d3ef" stroke="#3f7fc4" stroke-width="1.1"/></svg>
<div class="t" style="left:89px;top:100px">Mesh</div>
<div class="t" style="left:261px;top:85.5px;font-size:9.6px">(C:/Users/npettijohn/D...</div>
<div class="t" style="left:181px;top:114px;font-size:9.6px">.asc (C:/Users/npettijohn/Desktop/cloud c...</div>
<div class="t" style="left:164px;top:128px;font-size:9.6px">CLOUD - Cloud</div>
<div class="t" style="left:79px;top:113px">5</div>
<!-- scribbles -->
<svg class="a" style="left:70px;top:80px" width="200" height="62" viewBox="0 0 200 62">
<g fill="none" stroke="#000" stroke-linecap="round" stroke-linejoin="round">
<path d="M9 11.5C20 9 30 12 45 10.5S70 9 82 11S100 13 115 11.5S140 12 150 10.5S175 9 188 10.5" stroke-width="5.5"/>
<path d="M30 8.5C40 6.5 55 7 70 8.5M22 14C35 16 50 14.5 66 15M84 13.5C95 16 105 15 118 15M150 8C160 6.5 172 6.5 184 8" stroke-width="3"/>
<path d="M128 13C131 17 135 18.5 137 18M112 11L116 17" stroke-width="2.5"/>
<path d="M16 39C30 36.500 45 41.500 60 39.500S85 41 100 41.500S110 42.500 116 43" stroke-width="5"/>
<path d="M60 38C68 33 80 33.500 90 34S104 38 112 43.500" stroke-width="3.500"/>
<path d="M72 36.500C80 35 90 37 100 40" stroke-width="3"/>
<path d="M34 42L33 49M58 43L59 50" stroke-width="2"/>
<path d="M22 52C32 49.500 42 54 54 52.500S70 53 82 53.500S90 53 94 53" stroke-width="6"/>
<path d="M24 49.500C27 47.500 32 48 35 50.500M40 56.500C48 58 58 57.500 66 57M20 55C24 57 28 57 32 56" stroke-width="3"/>
</g></svg>
<svg class="a" style="left:367px;top:64.5px" width="6.5" height="6.5" viewBox="0 0 7 7"><path d="M2.6 .8H6.4L5.8 4M1.2 2.5H5L4.4 6.2H.6Z" fill="none" stroke="#222" stroke-width="1.2"/></svg>

<!-- PROPERTIES -->
<div class="a ptitle" style="left:26px;top:370.5px;width:349.5px"></div>
<div class="t" style="left:27px;top:372px;font-size:8.5px">Properties</div>
<div class="a box" id="props" style="left:33px;top:392px;width:335px;height:237px"></div>


<div class="a" id="ptable" style="left:34px;top:393px;width:320px;height:235px;overflow:hidden">
 <div class="row" style="top:0;height:19px;background:linear-gradient(#fff,#fdfdfe 45%,#f0f2f5);border-bottom:1px solid #e2e4e8"></div>
 <div class="a" style="left:73px;top:0;width:1px;height:19px;background:#e3e3e3"></div>
 <div class="row" style="top:19px;height:15px"></div>
 <div class="row alt" style="top:34px"></div>
 <div class="row dark" style="top:50px;height:13.500px"></div>
 <div class="row alt" style="top:63.500px;height:17.500px"></div>
 <div class="row" style="top:81px"></div>
 <div class="row alt" style="top:97px"></div>
 <div class="row dark" style="top:113px;height:13px"></div>
 <div class="t" style="left:3px;top:5px">Property</div>
 <div class="t" style="left:77px;top:5px">State/Value</div>
 <div class="t" style="left:2px;top:21px">Count</div>
 <div class="t" style="left:76px;top:21px">1</div>
 <div class="t" style="left:2px;top:37px">Active</div>
 <div class="t" style="left:2px;top:51px;color:#d0d0d0">Color Scale</div>
 <div class="t" style="left:2px;top:68px">Current</div>
 <div class="t" style="left:2px;top:84px">Steps</div>
 <div class="t" style="left:2px;top:99px">Visible</div>
 <div class="t" style="left:2px;top:114px;color:#d0d0d0">SF display par...</div>
 <div class="combo" style="left:73px;top:34px;width:247px;height:16px"></div>
 <div class="t" style="left:76px;top:37px;font-size:9.3px">C2M signed distances</div>
 <svg class="a" style="left:311px;top:40px" width="7" height="5"><path d="M.5 .5H6.5L3.5 4Z" fill="#111"/></svg>
 <div class="combo" style="left:73px;top:65px;width:226px;height:16px"></div>
 <svg class="a" style="left:289px;top:71px" width="7" height="5"><path d="M.5 .5H6.5L3.5 4Z" fill="#111"/></svg>
 <svg class="a" style="left:74px;top:66px" width="60" height="14" viewBox="0 0 60 14"><g fill="none" stroke="#000" stroke-linecap="round"><path d="M4 8C10 5.500 16 8 24 6.500S36 7.500 44 8.500" stroke-width="4.500"/><path d="M5 5L12 3M6 10.500C14 11.500 28 11 42 10.500M14 4C20 3 30 4 38 5" stroke-width="2.500"/></g></svg>
 <div class="a" style="left:303px;top:66px;width:16px;height:14px;border:1px solid #b5b5b5;border-radius:2px;background:linear-gradient(#f6f6f6,#e0e0e0)"></div>
 <svg class="a" style="left:304.500px;top:66.500px" width="13" height="13" viewBox="0 0 10 10"><circle cx="5" cy="5" r="2.6" fill="none" stroke="#b8b8b8" stroke-width="2.4" stroke-dasharray="1.4 .9"/><circle cx="5" cy="5" r="2.2" fill="#c4c4c4"/><circle cx="5" cy="5" r="1" fill="#e8e8e8"/></svg>
 <div class="t" style="left:76px;top:84px">9</div>
 <div class="a" style="left:76px;top:83px;width:1px;height:12px;background:#333"></div>
 <div class="sbtn" style="top:82px;height:7px"></div>
 <div class="sbtn" style="top:89px;height:7px"></div>
 <svg class="a" style="left:311px;top:84px" width="5" height="11"><path d="M0 3L2.5 .5L5 3ZM0 8L2.5 10.5L5 8Z" fill="#4a5f8a"/></svg>
 <div class="cb" style="left:75px;top:100px;background:linear-gradient(135deg,#dfe3ea,#fbfbfd)"></div>
 <svg class="a" style="left:76px;top:101px" width="9" height="9" viewBox="0 0 9 9"><path d="M1.5 4.5L3.5 7L7.5 1.5" fill="none" stroke="#3a4f9a" stroke-width="1.6"/></svg>

 <!-- tabs -->
 <div class="a" style="left:0;top:126px;width:320px;height:110px;background:#f0f0f0"></div>
 <div class="a" style="left:0;top:143px;width:320px;height:85px;background:#fff;border:1px solid #c9c9c9"></div>
 <div class="a" style="left:82px;top:128px;width:64px;height:16px;border:1px solid #b4b4b4;border-bottom-color:#c9c9c9;background:linear-gradient(#f4f4f4,#ececec 50%,#dcdcdc 51%,#d3d3d3)"></div>
 <div class="a" style="left:0;top:126px;width:83px;height:18px;border:1px solid #c9c9c9;border-bottom:none;background:#fff"></div>
 <div class="t" style="left:9px;top:129px">Display ranges</div>
 <div class="t" style="left:90px;top:130px">Parameters</div>

 <div class="spin" style="left:5px;top:149px;width:130px;height:16px"></div>
 <div class="spin" style="left:185px;top:149px;width:129px;height:16px"></div>
 <div class="spin" style="left:5px;top:187px;width:130px;height:16px"></div>
 <div class="spin" style="left:185px;top:187px;width:129px;height:16px"></div>
 <div class="t" style="left:8px;top:151px">-1.00000000</div>
 <div class="t" style="left:188px;top:151px">1.00000000</div>
 <div class="t" style="left:8px;top:189px">-0.20000000</div>
 <div class="t" style="left:188px;top:189px">0.20000000</div>
 <div class="t" style="left:140px;top:151px">displayed</div>
 <div class="t" style="left:138px;top:189px">saturation</div>
 <div class="a" style="left:125px;top:150px;width:9px;height:14px;background:linear-gradient(#f8f8f8,#dfe3ea);border:1px solid #c3c9d3"></div>
 <div class="a" style="left:304px;top:150px;width:9px;height:14px;background:linear-gradient(#f8f8f8,#dfe3ea);border:1px solid #c3c9d3"></div>
 <div class="a" style="left:125px;top:188px;width:9px;height:14px;background:linear-gradient(#f8f8f8,#dfe3ea);border:1px solid #c3c9d3"></div>
 <div class="a" style="left:304px;top:188px;width:9px;height:14px;background:linear-gradient(#f8f8f8,#dfe3ea);border:1px solid #c3c9d3"></div>
 <svg class="a" style="left:127px;top:152px" width="5" height="11"><path d="M0 3L2.5 .5L5 3ZM0 7.5L2.5 10L5 7.5Z" fill="#4a5f8a"/></svg>
 <svg class="a" style="left:306px;top:152px" width="5" height="11"><path d="M0 3L2.5 .5L5 3ZM0 7.5L2.5 10L5 7.5Z" fill="#4a5f8a"/></svg>
 <svg class="a" style="left:127px;top:190px" width="5" height="11"><path d="M0 3L2.5 .5L5 3ZM0 7.5L2.5 10L5 7.5Z" fill="#4a5f8a"/></svg>
 <svg class="a" style="left:306px;top:190px" width="5" height="11"><path d="M0 3L2.5 .5L5 3ZM0 7.5L2.5 10L5 7.5Z" fill="#4a5f8a"/></svg>
 <!-- sliders -->
 <div class="a" style="left:5px;top:173px;width:309px;height:3px;background:#e7e7e7;border:1px solid #d2d2d2;border-radius:1px"></div>
 <div class="a" style="left:5px;top:212px;width:309px;height:3px;background:#e7e7e7;border:1px solid #c0c0c0;border-radius:1px"></div>
 <div class="a sl" style="left:119px;top:169px"></div>
 <div class="a sl" style="left:191px;top:169px"></div>
 <div class="a sl" style="left:4px;top:207px"></div>
 <div class="a sl" style="left:305px;top:207px"></div>
</div>
<!-- props scrollbar -->
<div class="a" style="left:355px;top:393px;width:12px;height:235px;background:#f0f0f0"></div>
<div class="a" style="left:356px;top:546px;width:11px;height:68px;border:1px solid #b0b0b0;border-radius:2px;background:linear-gradient(90deg,#f2f2f2,#dedede 50%,#cfcfcf)"></div>
<div class="a" style="left:359px;top:577px;width:5px;height:1px;background:#8a8a8a;box-shadow:0 2px #8a8a8a,0 4px #8a8a8a"></div>
<svg class="a" style="left:358px;top:398.500px" width="6" height="4"><path d="M.3 3.800L3 .5L5.700 3.800Z" fill="#333"/></svg>
<svg class="a" style="left:358px;top:619.500px" width="6" height="4"><path d="M.3 .2L3 3.500L5.700 .2Z" fill="#333"/></svg>
<svg class="a" style="left:367px;top:374.5px" width="6.5" height="6.5" viewBox="0 0 7 7"><path d="M2.6 .8H6.4L5.8 4M1.2 2.5H5L4.4 6.2H.6Z" fill="none" stroke="#222" stroke-width="1.2"/></svg>

<!-- CONSOLE -->
<div class="a ptitle" style="left:26px;top:640.5px;width:1203px"></div>
<div class="t" style="left:27px;top:642px;font-size:8.5px">Console</div>
<div class="a box" style="left:33px;top:662px;width:1190px;height:53px"></div>


<div class="a" style="left:34px;top:678px;width:1174px;height:14px;background:#f5f5f5"></div>
<div class="t con" style="left:36px;top:666px">[08:24:49] [ComputeDistances] Mean distance = 0.000865 / std deviation = 0.325662</div>
<div class="t con" style="left:36px;top:680px"><span style="font-size:9.65px">[08:56:40] [I/O] File 'C:/Users/npettijohn/Desktop/cloud compare test files/</span><span style="letter-spacing:-.36px">5-820_20140203_VS_2013GS_20140215-TEST-CLOUDCOMPARE-TOOL.bin</span><span style="font-size:9.05px">' saved successfully</span></div>
<div class="t con" style="left:36px;top:694px"><span style="font-size:9.65px">[08:58:02] [I/O] File 'C:/Users/npettijohn/Desktop/cloud compare test files/</span><span style="letter-spacing:-.36px">5-820_20140203_VS_2013GS_20140215-TEST-CLOUDCOMPARE-TOOL.bin</span><span style="font-size:9.05px">' saved successfully</span></div>
<div class="a" style="left:1208px;top:663px;width:14px;height:51px;background:#f1f1f1"></div>
<div class="a" style="left:1209px;top:686px;width:12px;height:13px;border:1px solid #bcbcbc;border-radius:2px;background:linear-gradient(90deg,#f4f4f4,#dcdcdc 50%,#cdcdcd)"></div>
<svg class="a" style="left:1211.500px;top:668.500px" width="6" height="4"><path d="M.3 3.800L3 .5L5.700 3.800Z" fill="#333"/></svg>
<svg class="a" style="left:1211.500px;top:703.500px" width="6" height="4"><path d="M.3 .2L3 3.500L5.700 .2Z" fill="#333"/></svg>
<svg class="a" style="left:1209.5px;top:644px" width="6.5" height="6.5" viewBox="0 0 7 7"><path d="M2.6 .8H6.4L5.8 4M1.2 2.5H5L4.4 6.2H.6Z" fill="none" stroke="#222" stroke-width="1.2"/></svg>
<svg class="a" style="left:1219px;top:644px" width="7" height="7" viewBox="0 0 7 7"><path d="M1 1L6 6M6 1L1 6" fill="none" stroke="#111" stroke-width="1.4"/></svg>
<!-- left toolbar bottom line -->
<div class="a" style="left:0;top:720px;width:26px;height:1px;background:#d8d8d8"></div>
<div class="a" style="left:25px;top:60px;width:1px;height:661px;background:#e2e2e2"></div>

<!-- TASKBAR -->
<div class="a" style="left:0;top:737px;width:1229px;height:31px;background:linear-gradient(90deg,#889cb8 0,#8ea4c1 22px,#9db6d2 42px,#a8c2dd 62px,#a9c3de 70px,#a9c3de 1038px,#8ea9c7 1050px,#7f9ab9 1062px,#7d98b7 1216px)"></div>
<div class="a" style="left:0;top:737px;width:1229px;height:2px;background:linear-gradient(#6f8198,#c4d5e8)"></div>
<div class="a" style="left:7.5px;top:738.7px;width:27.5px;height:27.5px;border-radius:50%;background:linear-gradient(180deg,#c2d0df 0%,#a3b7cc 22%,#7590b0 44%,#0e3d78 53%,#0f569c 70%,#169cd8 87%,#2ad6f8 100%);box-shadow:0 0 0 1px rgba(195,215,235,.85),0 0 0 2px rgba(100,125,155,.35),inset 0 0 0 1px rgba(60,85,120,.55)"></div>
<svg class="a" style="left:11.8px;top:741.2px" width="20" height="20.500" viewBox="-.5 -.3 16 15.500"><path d="M1.5 2.8C3.5 1.6 5.5 1.8 7.2 2.8L6.4 7C4.8 6 3 6 .7 7Z" fill="#e8542a"/><path d="M8.4 3C10 4 12.5 4 14.6 2.8L13.8 7C12 8 9.6 8 7.6 7Z" fill="#7cc142"/><path d="M.5 8.2C2.5 7.2 4.6 7.2 6.2 8.2L5.4 12.4C3.8 11.4 1.8 11.4 -.3 12.4Z" fill="#2a9ae0"/><path d="M7.4 8.4C9.4 9.4 11.6 9.4 13.6 8.2L12.8 12.4C10.8 13.6 8.6 13.6 6.6 12.6Z" fill="#f8c02a"/></svg>
<svg class="a" style="left:55.5px;top:740.2px" width="26" height="25" viewBox="0 0 26 25"><defs><linearGradient id="ieg" x1="0" y1="0" x2="0" y2="1"><stop offset="0" stop-color="#173f8c"/><stop offset=".45" stop-color="#1b66c4"/><stop offset=".8" stop-color="#2a9ae4"/><stop offset="1" stop-color="#48c8f4"/></linearGradient></defs><path d="M13.200 2.300A10.200 10.200 0 1 0 13.200 22.700A10.200 10.200 0 1 0 13.200 2.300ZM8.700 11.200A4.500 4.200 0 0 1 17.700 11.200ZM8.700 14H23.250L22.500 16.600H18.300A5 3.600 0 0 1 8.700 14Z" fill="url(#ieg)" fill-rule="evenodd"/><path d="M3.600 16.500A10.200 10.200 0 0 0 22 18.500" fill="none" stroke="#5ad0f8" stroke-width="1.600" opacity=".55"/><path d="M1.200 22C-1.500 17 5 7.500 14 3.300C18 1.500 22.500 1 23.800 3.800C21 2.300 18 3 14.500 5.200C8 9.200 3.300 16.500 4.600 21.200C5.100 22.800 7 23.300 8.800 22.800C5.500 24.600 2.400 24 1.200 22Z" fill="#e6c64e"/><path d="M2 21.500C1 17 6.500 9 13.500 5" fill="none" stroke="#f6e08a" stroke-width=".9"/></svg>
<div class="a" style="left:90.5px;top:737.5px;width:43px;height:31px;border:1px solid #8195b0;border-bottom:none;border-radius:2px;background:linear-gradient(#c3d5ea,#b7cbe4 50%,#aec4df)"></div>
<svg class="a" style="left:99px;top:741px" width="27" height="24" viewBox="0 0 27 24"><path d="M1.5 4C1.5 2.5 2.5 1.5 4 1.5H22L24.5 4V21H1.5Z" fill="#e9d27a"/><path d="M1.5 6.5H25V21.5H1.5Z" fill="#f6e38e"/><path d="M1.5 21.5H25" stroke="#c8a848" stroke-width="1"/><rect x="4" y="2.6" width="3" height="2.4" fill="#4a9a4a"/><rect x="9" y="2.6" width="3" height="2.4" fill="#d05a4a"/><rect x="14" y="2.6" width="3" height="2.4" fill="#5a8ac8"/><path d="M4.5 23V15.5C4.5 14 5.5 13.5 7 13.5H19.5C21 13.5 22 14 22 15.5V23H17.5V19H9V23Z" fill="#6ab8e0"/><path d="M4.5 15.5C4.5 14 5.5 13.5 7 13.5H19.5C21 13.5 22 14 22 15.5V17H4.5Z" fill="#8fd0ee"/></svg>
<div class="a" style="left:144.5px;top:744px;width:20px;height:19px;border-radius:2px;background:linear-gradient(135deg,#aedbf5,#6db6e4);border:1px solid #7fb4dc"></div>
<svg class="a" style="left:145px;top:745px" width="17" height="17" viewBox="0 0 17 17"><circle cx="8.5" cy="8.5" r="7.8" fill="#e6721c"/><circle cx="8.5" cy="8.5" r="6.2" fill="#f38c2c"/><path d="M6 4.5L13 8.5L6 12.5Z" fill="#fff"/></svg>
<svg class="a" style="left:192.5px;top:741px" width="19" height="23" viewBox="0 0 19 23"><rect x=".5" y=".5" width="18" height="22" rx="2" fill="#a6c5e6" stroke="#7fa2c8"/><rect x="2.5" y="2.5" width="14" height="6.5" fill="#e4ecf6"/><rect x="2.5" y="2.5" width="14" height="2" fill="#f4e6c8"/><g fill="#dbe6f2"><rect x="2.5" y="11" width="3" height="2.4"/><rect x="6.4" y="11" width="3" height="2.4"/><rect x="10.3" y="11" width="3" height="2.4"/><rect x="14.2" y="11" width="2.6" height="2.4"/><rect x="2.5" y="14.4" width="3" height="2.4"/><rect x="6.4" y="14.4" width="3" height="2.4"/><rect x="10.3" y="14.4" width="3" height="2.4"/><rect x="2.5" y="17.8" width="3" height="2.4"/><rect x="6.4" y="17.8" width="3" height="2.4"/><rect x="10.3" y="17.8" width="3" height="2.4"/></g><rect x="14.2" y="14.4" width="2.6" height="5.8" fill="#f0b050"/></svg>
<div class="a" style="left:225px;top:737.5px;width:43.5px;height:31px;border:1px solid #8599b4;border-bottom:none;border-radius:2px;background:linear-gradient(#bccfe6,#b0c5df 50%,#a8bedb)"></div>
<svg class="a" style="left:233px;top:739px" width="27" height="26" viewBox="0 0 27 26"><rect x=".5" y=".5" width="24" height="24" rx="4" fill="#a4d8e8" stroke="#7fb8d0"/><path d="M.5 12C8 8 18 10 24.5 6V4.5C24.5 2 22.5 .5 20.5 .5H4.5C2 .5 .5 2 .5 4.5Z" fill="#c4e8f2"/><path d="M5.5 4V16.5H12.5" fill="none" stroke="#1c3474" stroke-width="3"/><path d="M11 9.5C15 6.5 21 9 21 14.5C21 18 18 20.5 14.5 20.5" fill="none" stroke="#d8f0f8" stroke-width="2.6"/><path d="M9.5 7L14.5 7.5L11.5 12Z" fill="#d8f0f8"/><rect x="17" y="17.5" width="9" height="8.5" rx="1.2" fill="#38b838" stroke="#2a8a2a"/><rect x="19" y="19.5" width="5" height="4.5" fill="#7ae07a"/></svg>
<div class="a" style="left:269.5px;top:737.5px;width:43px;height:31px;border:1px solid #a9b9cf;border-bottom:none;border-radius:2px;background:linear-gradient(#eef3f9,#e3eaf3 50%,#d9e3ef)"></div>
<svg class="a" style="left:279.5px;top:743.5px" width="23" height="18" viewBox="0 0 23 18"><g fill="none" stroke="#1f5583"><path d="M10 1.2C3.8 1.2 1.2 5 1.2 9C1.2 13 3.8 16.8 10 16.8" stroke-width="2.2"/><path d="M13.5 1.3C8 1.3 5.8 5 5.8 9C5.8 13 8 16.7 13.500 16.700" stroke-width="2"/><path d="M21.300 5.600C20.300 2.800 18 1.400 15.800 1.400C12 1.400 9.800 4.600 9.800 9C9.800 13.400 12 16.600 15.800 16.600C18 16.600 20.300 15.200 21.300 12.400" stroke-width="3"/><path d="M9 1.300H16M9 16.700H16" stroke-width="2"/></g></svg>
<svg class="a" style="left:1069.5px;top:751px" width="7" height="5" viewBox="0 0 7 5"><path d="M.3 4.5L3.5 .5L6.7 4.5Z" fill="#f4f8fc"/></svg>
<svg class="a" style="left:1087px;top:746.5px" width="14" height="14" viewBox="0 0 14 14"><path d="M2.5 1V13" stroke="#e8eef4" stroke-width="1.5"/><path d="M3.5 1.8C6 .5 7.5 3 10.5 1.8V8C7.5 9.2 6 6.8 3.5 8Z" fill="#f4f8fc"/><circle cx="9.8" cy="10" r="3.6" fill="#d83030"/><path d="M8.2 8.4L11.4 11.6M11.4 8.4L8.2 11.6" stroke="#fff" stroke-width="1.1"/></svg>
<svg class="a" style="left:1107px;top:745.5px" width="13" height="15" viewBox="0 0 13 15"><rect x="1.5" y="2" width="5.5" height="12" rx="1" fill="#f0f4f8" stroke="#5c6c80" stroke-width=".9"/><rect x="3" y=".6" width="2.5" height="1.6" fill="#e0e6ee"/><path d="M9.5 3V6M11.5 3V6" stroke="#f0f4f8" stroke-width="1.1"/><path d="M8.5 6H12.5V8.5C12.5 9.5 11.5 10 10.5 10V14" fill="none" stroke="#f0f4f8" stroke-width="1.4"/><rect x="8.5" y="6" width="4" height="3" fill="#f0f4f8"/></svg>
<svg class="a" style="left:1127px;top:748px" width="11" height="11" viewBox="0 0 11 11"><rect x=".5" y="7.5" width="2" height="3" fill="#e8eef4"/><rect x="3.2" y="5.5" width="2" height="5" fill="#e0e6ee"/><rect x="5.9" y="3" width="2" height="7.5" fill="#7a8898"/><rect x="8.6" y=".5" width="2" height="10" fill="#6e7c8e"/></svg>
<svg class="a" style="left:1145px;top:745px" width="13" height="15" viewBox="0 0 13 15"><path d="M1 5.5H3.5L7 2V13L3.5 9.5H1Z" fill="#f4f8fc" stroke="#8a98aa" stroke-width=".6"/><path d="M8.8 5C10 6.4 10 8.6 8.8 10M10.6 3.4C12.6 5.8 12.6 9.2 10.6 11.6" fill="none" stroke="#f0f4f8" stroke-width="1"/></svg>
<div class="t" style="left:1174.5px;top:741px;font-size:8.9px;color:#f6f9fc">2:28 PM</div>
<div class="t" style="left:1170px;top:755px;font-size:9.65px;color:#f6f9fc">2/15/2014</div>
<div class="a" style="left:1219px;top:738px;width:10px;height:30px;background:linear-gradient(90deg,#55677f,#6f829c 30%,#8ea4bf 100%);border-left:1px solid #5a6b82"></div>

</body>
</html>
